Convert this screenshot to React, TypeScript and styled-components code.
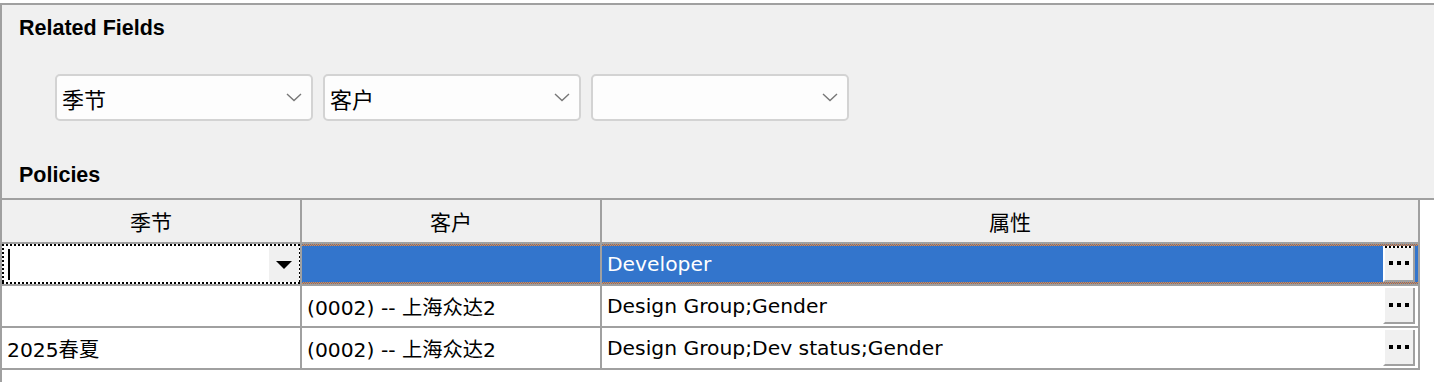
import React from "react";
import styled, { createGlobalStyle } from "styled-components";

const GlobalStyle = createGlobalStyle`
  html, body { margin: 0; padding: 0; background: #ffffff; }
  * { box-sizing: border-box; }
`;

const LINE = "#a0a0a0";
const BODY_FONT = `"DejaVu Sans", "Noto Sans CJK SC", sans-serif`;
const CJK_FONT = `"Noto Sans CJK SC", "DejaVu Sans", sans-serif`;

const Frame = styled.div`
  width: 1434px;
  height: 382px;
  padding-top: 3px;
  display: flex;
  flex-direction: column;
  background: #ffffff;
  overflow: hidden;
`;

const Panel = styled.section`
  height: 195px;
  flex: none;
  background: #f0f0f0;
  border-top: 2px solid ${LINE};
  border-left: 2px solid ${LINE};
  padding: 11px 0 0 17px;
  display: flex;
  flex-direction: column;
`;

const SectionTitle = styled.h2<{ $gap?: number }>`
  margin: ${(p) => p.$gap ?? 0}px 0 0 0;
  font-family: "Liberation Sans", Arial, sans-serif;
  font-weight: 700;
  font-size: 21.5px;
  line-height: 24px;
  color: #000;
`;

const FieldsRow = styled.div`
  margin: 34px 0 0 36px;
  display: flex;
  gap: 10px;
`;

const Select = styled.div`
  width: 258px;
  height: 47px;
  border: 2px solid #d3d3d3;
  border-radius: 5px;
  background: #fdfdfd;
  display: flex;
  align-items: center;
  padding: 0 9px 0 5px;
`;

const SelectText = styled.span`
  flex: 1;
  font-family: ${CJK_FONT};
  font-size: 22px;
  line-height: 26px;
  color: #000;
`;

const Chevron = () => (
  <svg width="16" height="9" viewBox="0 0 16 9" aria-hidden="true">
    <path d="M1 1 L8 7.5 L15 1" fill="none" stroke="#777" strokeWidth="1.4" />
  </svg>
);

const Grid = styled.div`
  flex: 1;
  background: #ffffff;
  border-top: 2px solid ${LINE};
  border-left: 2px solid ${LINE};
  display: grid;
  grid-template-columns: 300px 300px 818px;
  grid-template-rows: 44px;
  grid-auto-rows: 42px;
  align-content: start;
`;

const HeadCell = styled.div`
  background: #f0f0f0;
  border-right: 2px solid ${LINE};
  border-bottom: 2px solid ${LINE};
  display: flex;
  align-items: center;
  justify-content: center;
  font-family: ${CJK_FONT};
  font-size: 21px;
  color: #000;
`;

const Cell = styled.div<{ $selected?: boolean }>`
  border-right: 2px solid ${LINE};
  border-bottom: 2px solid ${LINE};
  display: flex;
  align-items: center;
  padding: 0 3px 0 5px;
  font-family: ${BODY_FONT};
  font-size: 20.3px;
  color: ${(p) => (p.$selected ? "#ffffff" : "#000000")};
  white-space: nowrap;
  background: ${(p) =>
    p.$selected
      ? `repeating-conic-gradient(#ee8a3e 0 25%, #58729c 0 50%) top left / 2px 2px repeat-x,
         repeating-conic-gradient(#ee8a3e 0 25%, #58729c 0 50%) bottom left / 2px 2px repeat-x,
         #3375cc`
      : "#ffffff"};
`;

const CellText = styled.span`
  flex: 1;
  overflow: hidden;
`;

const EditorCell = styled.div`
  border-right: 2px solid ${LINE};
  border-bottom: 2px solid ${LINE};
  padding: 0 1px 0 2px;
  display: flex;
  align-items: center;
  background:
    repeating-linear-gradient(90deg, #000 0 2px, #fff 2px 4px) top left / 100% 2px no-repeat,
    repeating-linear-gradient(90deg, #000 0 2px, #fff 2px 4px) bottom left / 100% 2px no-repeat,
    repeating-linear-gradient(180deg, #000 0 2px, #fff 2px 4px) top left / 2px 100% no-repeat,
    repeating-linear-gradient(180deg, #000 0 2px, #fff 2px 4px) top right / 2px 100% no-repeat,
    #ffffff;
`;

const Caret = styled.span`
  width: 2px;
  height: 31px;
  margin-left: 4px;
  background: #000;
`;

const Spacer = styled.span`
  flex: 1;
`;

const DropButton = styled.span`
  width: 32px;
  height: 36px;
  background: #f0f0f0;
  border-left: 2px solid #ffffff;
  display: flex;
  align-items: center;
  justify-content: center;
`;

const Triangle = styled.span`
  width: 0;
  height: 0;
  border-left: 8px solid transparent;
  border-right: 8px solid transparent;
  border-top: 8px solid #000;
  margin-top: 1px;
`;

const EllipsisButton = styled.span<{ $focused?: boolean }>`
  width: 32px;
  height: 36px;
  flex: none;
  background: ${(p) =>
    p.$focused
      ? `repeating-linear-gradient(90deg, #000 0 2px, #fff 2px 4px) top left / 100% 2px no-repeat, #f0f0f0`
      : "#f0f0f0"};
  border-left: 2px solid #ffffff;
  border-right: 2px solid ${LINE};
  border-bottom: 2px solid ${LINE};
  display: flex;
  align-items: center;
  justify-content: center;
  gap: 4px;
`;

const Dot = styled.span`
  width: 4px;
  height: 4px;
  background: #000;
`;

const Ellipsis = ({ focused }: { focused?: boolean }) => (
  <EllipsisButton $focused={focused}>
    <Dot />
    <Dot />
    <Dot />
  </EllipsisButton>
);

const fields = ["季节", "客户", ""];
const columns = ["季节", "客户", "属性"];
const rows = [
  { season: "", customer: "(0002) -- 上海众达2", attrs: "Design Group;Gender" },
  { season: "2025春夏", customer: "(0002) -- 上海众达2", attrs: "Design Group;Dev status;Gender" },
];

export default function App() {
  return (
    <>
      <GlobalStyle />
      <Frame>
        <Panel>
          <SectionTitle>Related Fields</SectionTitle>
          <FieldsRow>
            {fields.map((f, i) => (
              <Select key={i}>
                <SelectText>{f}</SelectText>
                <Chevron />
              </Select>
            ))}
          </FieldsRow>
          <SectionTitle $gap={42}>Policies</SectionTitle>
        </Panel>
        <Grid>
          {columns.map((c) => (
            <HeadCell key={c}>{c}</HeadCell>
          ))}
          <EditorCell>
            <Caret />
            <Spacer />
            <DropButton>
              <Triangle />
            </DropButton>
          </EditorCell>
          <Cell $selected />
          <Cell $selected>
            <CellText>Developer</CellText>
            <Ellipsis focused />
          </Cell>
          {rows.map((r, i) => (
            <React.Fragment key={i}>
              <Cell>
                <CellText>{r.season}</CellText>
              </Cell>
              <Cell>
                <CellText>{r.customer}</CellText>
              </Cell>
              <Cell>
                <CellText>{r.attrs}</CellText>
                <Ellipsis />
              </Cell>
            </React.Fragment>
          ))}
        </Grid>
      </Frame>
    </>
  );
}
